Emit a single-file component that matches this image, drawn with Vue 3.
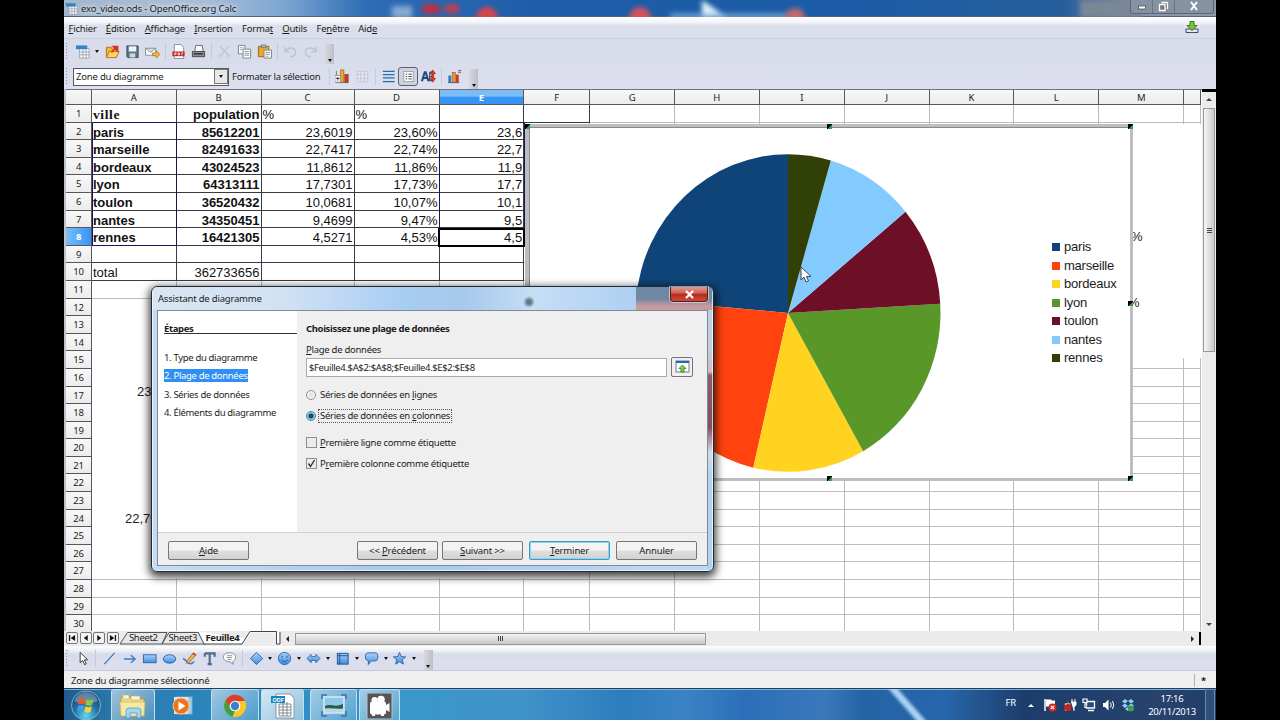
<template>
  <div class="screen">
    <svg class="sprite" width="0" height="0">
      <defs>
        <linearGradient id="blueFill" x1="0" y1="0" x2="0" y2="1">
          <stop offset="0" stop-color="#a9d2f8" />
          <stop offset="1" stop-color="#3f8ee0" />
        </linearGradient>
        <symbol id="i-new" viewBox="0 0 16 16">
          <rect x="5" y="5" width="10" height="10" fill="#fff" stroke="#9aa3b0" />
          <path d="M5 8.5h10M5 11.5h10M8.5 5v10M11.8 5v10" stroke="#9aa3b0" />
          <rect x="1" y="1.5" width="12" height="4" fill="#2f86c8" />
        </symbol>
        <symbol id="i-open" viewBox="0 0 16 16">
          <path d="M1.5 14.5v-11h5l1 2h5v3" fill="#f3b73c" stroke="#b4701c" />
          <path d="M1.5 14.5l3-6.5h10.5l-3 6.5z" fill="#fbd568" stroke="#b4701c" />
          <path d="M7 9l4-5M8.5 2.5h5v5z" fill="#d9301c" stroke="#d9301c" stroke-width="1.5" />
        </symbol>
        <symbol id="i-save" viewBox="0 0 16 16">
          <path d="M2 2h12v12.5h-11l-1-1z" fill="#5d7382" stroke="#3c4c5c" />
          <rect x="4" y="2.5" width="8" height="5.5" fill="#eef3f7" />
          <rect x="5" y="10" width="6" height="4.5" fill="#c9d4dd" />
        </symbol>
        <symbol id="i-mail" viewBox="0 0 16 16">
          <path d="M.5 4.5h11v7.5h-11zM.5 4.5l5.5 4.5 5.5-4.5" fill="#fff" stroke="#8a8f98" />
          <path d="M8 9.5h4v-2.5l4 4-4 4v-2.5h-4z" fill="#f5b53a" stroke="#a8681a" stroke-width=".7" />
        </symbol>
        <symbol id="i-pdf" viewBox="0 0 16 16">
          <path d="M3.5 .5h7l3 3v12h-10z" fill="#fff" stroke="#858b95" />
          <rect x="1.5" y="8" width="13" height="5" fill="#c5232b" />
          <path d="M4 12V9.5h1.5v1.2H4M7.5 9.5v2.2h1.5v-2.2zM11.5 12V9.5h1.5" stroke="#fff" stroke-width=".8" fill="none" />
        </symbol>
        <symbol id="i-print" viewBox="0 0 16 16">
          <path d="M4 8l1-6.5h7l1 6.5z" fill="#f8f8f8" stroke="#666" />
          <path d="M1.5 8h13v5.5h-13z" fill="#8b9099" stroke="#44484f" />
          <path d="M3 10.5h10" stroke="#2d3035" stroke-width="1.5" />
        </symbol>
        <symbol id="i-cut" viewBox="0 0 16 16">
          <path d="M3 2l9 10M13 2L4 12" stroke="#c3c6d0" stroke-width="1.5" />
          <circle cx="3.5" cy="13" r="1.8" fill="none" stroke="#c3c6d0" /><circle cx="12.5" cy="13" r="1.8" fill="none" stroke="#c3c6d0" />
        </symbol>
        <symbol id="i-copy" viewBox="0 0 16 16">
          <path d="M1.5 1.5h7v9h-7z" fill="#fff" stroke="#7a8290" /><path d="M3 4h4M3 6h4" stroke="#9aa" />
          <path d="M6.5 5.5h8v9.5h-8z" fill="#fff" stroke="#7a8290" /><path d="M8 8h5M8 10h5M8 12h5" stroke="#8a94a4" />
        </symbol>
        <symbol id="i-paste" viewBox="0 0 16 16">
          <path d="M1.5 2.5h11v11h-11z" fill="#e9a92d" stroke="#9a661a" />
          <rect x="4.5" y="1" width="5" height="3" fill="#a9aeb7" stroke="#666" stroke-width=".6" />
          <path d="M7.5 6.5h8v8.5h-8z" fill="#fff" stroke="#7a8290" /><path d="M9 9h5M9 11h5M9 13h3" stroke="#8a94a4" />
        </symbol>
        <symbol id="i-undo" viewBox="0 0 16 16">
          <path d="M2 3v5h5M2.5 7.5c3-5 11-4 11 1.5 0 3-3 4.5-6 4.5" fill="none" stroke="#c0c4cf" stroke-width="1.6" />
        </symbol>
        <symbol id="i-redo" viewBox="0 0 16 16">
          <path d="M14 3v5H9M13.5 7.5c-3-5-11-4-11 1.5 0 3 3 4.5 6 4.5" fill="none" stroke="#c0c4cf" stroke-width="1.6" />
        </symbol>
        <symbol id="i-charttype" viewBox="0 0 16 16">
          <path d="M1.5 2v12.5h13" fill="none" stroke="#777" />
          <rect x="6" y="1" width="3.5" height="13" fill="#f0a52a" stroke="#8a5a14" stroke-width=".6" />
          <rect x="10.5" y="6" width="3.5" height="8" fill="#cf3c2c" stroke="#7a1c14" stroke-width=".6" />
          <rect x="0" y="7" width="6" height="7" fill="#fff" stroke="#777" stroke-width=".7" /><path d="M1 10h4M3 8.5v4" stroke="#333" />
        </symbol>
        <symbol id="i-table" viewBox="0 0 16 16">
          <path d="M2.5 2.5h11v11h-11zM2.5 6h11M2.5 10h11M6 2.5v11M10 2.5v11" fill="#e4e6ee" stroke="#c5c8d2" />
        </symbol>
        <symbol id="i-hlines" viewBox="0 0 16 16">
          <rect x="2" y="2" width="12.5" height="12" fill="#cfe0f5" />
          <path d="M2 2.5h12.5M2 6h12.5M2 9.5h12.5M2 13.5h12.5" stroke="#33689f" stroke-width="1.3" />
        </symbol>
        <symbol id="i-legend" viewBox="0 0 16 16">
          <rect x="3" y="2.5" width="10" height="11" fill="#fafafa" stroke="#8b909a" stroke-width=".8" />
          <path d="M5 5.5h1.5M5 8h1.5M5 10.5h1.5M8 5.5h3.5M8 8h3.5M8 10.5h3.5" stroke="#444" />
        </symbol>
        <symbol id="i-scale" viewBox="0 0 16 16">
          <path d="M1 13L4 3.5h1L8 13M2.5 9.5h4" fill="none" stroke="#234a78" stroke-width="2.2" />
          <path d="M9 3.5h3M9 8h3M9 12.5h3M9.3 3v10" stroke="#234a78" stroke-width="1.2" />
          <path d="M12.5 1l3 4h-2v5h2l-3 4-3-4h2v-5h-2z" fill="#d63a26" stroke="#8a1c10" stroke-width=".6" />
        </symbol>
        <symbol id="i-bars" viewBox="0 0 16 16">
          <rect x="1.5" y="7" width="3" height="7" fill="#2d78bd" /><rect x="5.5" y="3.5" width="3.5" height="10.5" fill="#f0922a" stroke="#8a4a14" stroke-width=".5" /><rect x="9.5" y="6" width="3" height="8" fill="#c9382a" />
          <path d="M1 14.5h12M12 1.5h3M12 3.5h3" stroke="#555" />
        </symbol>
        <symbol id="i-select" viewBox="0 0 16 16">
          <path d="M5.5 1.5v11l2.7-2.5 2 4.5 1.8-.8-2-4.3h3.5z" fill="#fff" stroke="#222" stroke-width=".9" />
        </symbol>
        <symbol id="i-line" viewBox="0 0 16 16"><path d="M2.5 14L13.5 2" stroke="#3b6fb0" stroke-width="1.2" /></symbol>
        <symbol id="i-arrow" viewBox="0 0 16 16"><path d="M2 8.5h12M9.5 4.5l4.5 4-4.5 4" fill="none" stroke="#3b7cc4" stroke-width="1.4" /></symbol>
        <symbol id="i-rect" viewBox="0 0 16 16"><rect x="1.5" y="4" width="13.5" height="8.5" fill="url(#blueFill)" stroke="#2d63a4" /></symbol>
        <symbol id="i-ellipse" viewBox="0 0 16 16"><ellipse cx="8" cy="8.5" rx="6.7" ry="4.5" fill="url(#blueFill)" stroke="#2d63a4" /></symbol>
        <symbol id="i-pen" viewBox="0 0 16 16">
          <path d="M1 8c3 1 5 5 7 5.5s4-1 5-2.5" fill="none" stroke="#3b7cc4" stroke-width="1.5" />
          <path d="M5 11l7-9 3 2-7 8-3.5 1z" fill="#f4b640" stroke="#8a5a14" stroke-width=".8" /><path d="M11.5 2.5l3 2" stroke="#c23a20" stroke-width="1.5" />
        </symbol>
        <symbol id="i-text" viewBox="0 0 16 16"><path d="M3 2.5h10.5v3.5M3 2.5V6M8.2 2.5v11M6 14h4.5" fill="none" stroke="#4c6a8c" stroke-width="2.2" /></symbol>
        <symbol id="i-note" viewBox="0 0 16 16">
          <path d="M8 2c4.5 0 6.5 2 6.5 4.7S12 11 11.5 11.2l.5 3-3.5-2.8C4 11.5 1.5 9.5 1.5 6.7S3.5 2 8 2z" fill="#fff" stroke="#7c8591" />
          <path d="M5 5h6M5 7h6M6 9h4" stroke="#7c8591" stroke-width=".9" />
        </symbol>
        <symbol id="i-diamond" viewBox="0 0 16 16"><path d="M8 1.5l6.5 6.5L8 14.5 1.5 8z" fill="url(#blueFill)" stroke="#2d63a4" /></symbol>
        <symbol id="i-smiley" viewBox="0 0 16 16">
          <circle cx="8" cy="8" r="6.5" fill="url(#blueFill)" stroke="#2d63a4" /><path d="M5.5 5v2M10.5 5v2M4.5 9c1.5 3 5.5 3 7 0" fill="none" stroke="#1d4c86" />
        </symbol>
        <symbol id="i-dbl" viewBox="0 0 16 16"><path d="M1 8l4.5-4.5V6h5V3.5L15 8l-4.5 4.5V10h-5v2.5z" fill="url(#blueFill)" stroke="#2d63a4" stroke-width=".9" /></symbol>
        <symbol id="i-flow" viewBox="0 0 16 16"><rect x="2.5" y="2.5" width="11.5" height="11.5" fill="url(#blueFill)" stroke="#1f4f8c" /><path d="M5 2.5v11.5M2.5 5h11.5" stroke="#1f4f8c" /></symbol>
        <symbol id="i-callout" viewBox="0 0 16 16"><path d="M4 2h8.5c3 0 3 8.5 0 8.5H8l-3.5 4 .3-4C.5 10.5.5 2 4 2z" fill="url(#blueFill)" stroke="#2d63a4" /></symbol>
        <symbol id="i-star" viewBox="0 0 16 16"><path d="M8 1.5l1.8 4.5 4.7.3-3.6 3 1.2 4.7L8 11.4 3.9 14l1.2-4.7-3.6-3 4.7-.3z" fill="url(#blueFill)" stroke="#2d63a4" /></symbol>
      </defs>
    </svg>

    <div class="desktop">
      <header class="titlebar">
        <svg class="title-blur" width="1152" height="17">
          <g class="blobs">
            <rect x="328" y="6" width="20" height="12" fill="#dfe9f5" opacity=".5" />
            <ellipse cx="367" cy="9" rx="10" ry="5" fill="#c0303c" /><ellipse cx="388" cy="9" rx="8" ry="5" fill="#b84250" />
            <circle cx="423" cy="18" r="11" fill="#d4464e" /><circle cx="576" cy="18" r="11" fill="#d4525c" />
            <path d="M638 0l26 18h-26z" fill="#e4f4fa" /><rect x="606" y="13" width="130" height="6" fill="#7fb4dc" opacity=".7" />
            <circle cx="731" cy="18" r="10" fill="#c06a72" /><rect x="1016" y="0" width="62" height="18" fill="#7a8796" />
          </g>
        </svg>
        <svg class="title-icon" width="13" height="13"><use href="#i-new" /></svg>
        <span class="title-text">exo_video.ods - OpenOffice.org Calc</span>
        <div class="win-buttons">
          <span><svg width="10" height="10"><rect x="1.5" y="5" width="7" height="3" fill="#fff" stroke="#444" stroke-width=".7" /></svg></span>
          <span><svg width="11" height="11"><path d="M3.5 1.5h6v6.5M1.5 3.5h5.5v6h-5.5z" fill="#777" stroke="#fff" stroke-width="1.3" /></svg></span>
          <span class="win-close"><svg width="10" height="10"><path d="M2 1l6 8M8 1L2 9" stroke="#fff" stroke-width="2" /></svg></span>
        </div>
      </header>

      <nav class="menubar">
        <span v-for="m in menus" :key="m[1]" class="menu-item">{{ m[0] }}<u>{{ m[1] }}</u>{{ m[2] }}</span>
        <svg class="update-icon" width="14" height="13" viewBox="0 0 14 13">
          <path d="M1 8h12v3.5H1z" fill="#dfe6f2" stroke="#33506e" />
          <path d="M5 .5h4v4h3L7 9.5 2 4.5h3z" fill="#7cc23a" stroke="#3d7a14" />
        </svg>
      </nav>

      <div class="toolbar tb-standard">
        <i class="grip"></i>
        <template v-for="(t, i) in standardTools" :key="i">
          <i v-if="t === '|'" class="sep"></i>
          <i v-else-if="t === 'v'" class="caret"></i>
          <span v-else class="tool"><svg width="15" height="15"><use :href="'#i-' + t" /></svg></span>
        </template>
        <i class="overflow"></i>
      </div>

      <div class="toolbar tb-format">
        <i class="grip"></i>
        <div class="combo"><span>Zone du diagramme</span><b><i class="caret"></i></b></div>
        <span class="format-label">Formater la sélection</span>
        <template v-for="(t, i) in chartTools" :key="i">
          <i v-if="t === '|'" class="sep"></i>
          <span v-else class="tool" :class="{ pressed: t === 'legend' }"><svg width="15" height="15"><use :href="'#i-' + t" /></svg></span>
        </template>
        <i class="overflow"></i>
      </div>

      <main class="workspace">
        <div class="sheet">
          <div class="row head">
            <div class="cell corner"></div>
            <div v-for="c in columns" :key="c" class="cell col-head" :class="{ active: c === 'E' }">{{ c }}</div>
          </div>
          <div v-for="r in 30" :key="r" class="row">
            <div class="cell row-head" :class="{ active: r === 8 }">{{ r }}</div>
            <div v-for="(c, ci) in columns" :key="c" class="cell" :class="cellClass(r, ci)">{{ cellText(r, ci) }}</div>
          </div>

          <div class="old-chart left"><span class="pct p1">23,6</span><span class="pct p2">22,7%</span></div>
          <div class="old-chart right"><span class="pct p3">%</span><span class="pct p4">%</span></div>
          <div class="range range-a"></div>
          <div class="range range-e"></div>
          <div class="cursor-cell"></div>

          <div class="chart">
            <svg class="pie" width="600" height="350">
              <path v-for="s in slices" :key="s.name" :d="s.d" :fill="s.color" />
            </svg>
            <ul class="legend">
              <li v-for="s in slices" :key="s.name"><svg width="8" height="8"><rect width="8" height="8" :fill="s.color" /></svg>{{ s.name }}</li>
            </ul>
            <i class="handle tl"></i><i class="handle tc"></i><i class="handle tr"></i>
            <i class="handle mr"></i><i class="handle bc"></i><i class="handle br"></i>
          </div>
          <svg class="pointer" width="12" height="18" viewBox="0 0 12 18">
            <path d="M1 1v13l3-2.8 2 4.8 2.5-1-2-4.6H11z" fill="#fff" stroke="#333" stroke-width=".9" />
          </svg>
        </div>
        <div class="vscroll">
          <i class="split"></i>
          <i class="tri up"></i>
          <div class="vthumb"><i></i><i></i><i></i></div>
          <i class="tri down"></i>
        </div>
      </main>

      <div class="tabbar">
        <div class="nav-btns">
          <span v-for="(d, i) in navPaths" :key="i"><svg width="8" height="8" viewBox="0 0 9 9"><path :d="d" fill="#111" /></svg></span>
        </div>
        <div class="tabs">
          <svg class="tab-shape" width="165" height="14">
            <path d="M0 13L7.5 1.5H47L42 13zM42 13L49 1.5H80l6 11.5z" fill="#e6e6e6" stroke="#555" />
            <path d="M77 0L84 13H123L130 .5H159V13" fill="#fff" stroke="none" />
            <path d="M78 1l6 12H122L130 .5H156.5V13H160V1" fill="none" stroke="#444" />
            <path d="M124 13L131 1.5H156V13z" fill="#ececec" />
          </svg>
          <span class="tab">Sheet2</span><span class="tab">Sheet3</span><span class="tab current">Feuille4</span>
        </div>
        <div class="hscroll">
          <i class="tri prev"></i>
          <div class="hthumb"><i></i><i></i><i></i></div>
          <i class="tri next"></i>
          <i class="hsplit"></i>
        </div>
      </div>

      <div class="toolbar tb-draw">
        <i class="grip"></i>
        <template v-for="(t, i) in drawTools" :key="i">
          <i v-if="t === '|'" class="sep"></i>
          <i v-else-if="t === 'v'" class="caret"></i>
          <span v-else class="tool"><svg width="15" height="15"><use :href="'#i-' + t" /></svg></span>
        </template>
        <i class="overflow"></i>
      </div>

      <div class="statusbar"><span>Zone du diagramme sélectionné</span><b>*</b></div>

      <footer class="taskbar">
        <svg class="streak" width="120" height="31"><path d="M26 -6L70 44" stroke="#a9d2f4" stroke-width="7" /></svg>
        <svg class="orb" width="32" height="32" viewBox="0 0 32 32">
          <defs>
            <radialGradient id="orbFill" cx=".5" cy=".85" r=".8">
              <stop offset="0" stop-color="#5fd8f4" /><stop offset=".5" stop-color="#2276a8" /><stop offset="1" stop-color="#16426e" />
            </radialGradient>
          </defs>
          <circle cx="16" cy="16.5" r="14.5" fill="url(#orbFill)" stroke="#9fc4dc" stroke-width=".8" />
          <path d="M4 12a12.5 12.5 0 0 1 24 0c-7 3-17 3-24 0z" fill="#fff" opacity=".3" />
          <path d="M9 10c2-1 4-1 6.5 0l-1 5.5c-2-1-4-1-6.5 0z" fill="#ee5a28" />
          <path d="M16.5 10.5c2 1 4 1 7 0l-1.5 5.5c-2 1-4 1-6.5 0z" fill="#8fc83c" />
          <path d="M8 17c2-1 4-1 6.5 0l-1 5.5c-2-1-4-1-6.5 0z" fill="#3f9fe8" />
          <path d="M15.3 17.5c2 1 4 1 6.7 0l-1.5 5.5c-2 1-4 1-6.2 0z" fill="#fcd03a" />
        </svg>
        <div class="task b-explorer">
          <svg width="28" height="26" viewBox="0 0 28 26">
            <path d="M2 4h9l1 2h13v17H2z" fill="#f1dc84" stroke="#c0a03c" /><path d="M4 2h6v4H4zM12 3h9v4h-9z" fill="#f8f3d8" stroke="#c9b264" stroke-width=".6" />
            <path d="M1 9h25l-1 14H2z" fill="#f7e9a4" stroke="#cdb255" stroke-width=".7" />
            <path d="M7 25v-7q0-3 3-3h9q3 0 3 3v7h-4v-5h-7v5z" fill="#a5d6f0" stroke="#4f9cc8" stroke-width=".8" />
          </svg>
        </div>
        <div class="task plain b-media">
          <svg width="22" height="22" viewBox="0 0 22 22">
            <rect x="5" y="2" width="15" height="17" fill="#a9cfe8" stroke="#7aaed0" /><rect x="2" y="2" width="14" height="17" fill="#d4e8f5" />
            <circle cx="9" cy="11" r="8" fill="#ee7420" stroke="#fbc08a" /><path d="M6.5 6.5l7 4.5-7 4.5z" fill="#fff" />
          </svg>
        </div>
        <div class="task b-chrome">
          <svg width="24" height="24" viewBox="0 0 24 24">
            <circle cx="12" cy="12" r="11" fill="#fbc927" />
            <path d="M2.5 6.5L8 14.5A5 5 0 0 0 12 17L9.5 22.7A11 11 0 0 1 2.5 6.5z" fill="#3ba14a" />
            <path d="M2.5 6.5L7.7 14l4-7H22A11 11 0 0 0 2.5 6.5z" fill="#dd3e2f" />
            <circle cx="12" cy="12" r="5.3" fill="#fff" /><circle cx="12" cy="12" r="4.2" fill="#3c7fd0" />
          </svg>
        </div>
        <div class="task active b-odf">
          <svg width="24" height="26" viewBox="0 0 24 26">
            <path d="M5 1h14l4 4v20H5z" fill="#fff" stroke="#8895a2" /><path d="M8 11h12v12H8zM8 14h12M8 17h12M8 20h12M12 9v14M16 9v14" fill="none" stroke="#66717d" stroke-width=".8" />
            <rect x="0" y="3" width="14" height="7" fill="#1585c0" />
            <text x="1.5" y="9" class="odf-text">ODF</text>
          </svg>
        </div>
        <div class="task b-photo">
          <svg width="26" height="24" viewBox="0 0 26 24">
            <rect x="3" y="3" width="20" height="16" fill="#8fc8ea" stroke="#dceaf4" stroke-width="1.5" /><path d="M4 12c5-3 10 2 18-2v5H4z" fill="#2c5a4c" /><path d="M4 14.5c6-1 12 1 18 0V18H4z" fill="#b8d8e4" />
            <path d="M1 5V1h5M20 1h5v4M25 17v5h-5M6 22H1v-5" fill="none" stroke="#3f6fae" stroke-width="1.5" />
          </svg>
        </div>
        <div class="task b-camera">
          <svg width="27" height="26" viewBox="0 0 27 26">
            <rect x="1" y="0" width="25" height="26" fill="#5a5356" stroke="#b8c4cc" />
            <circle cx="8.5" cy="7" r="3" fill="#fff" /><circle cx="15" cy="6.5" r="3.8" fill="#fff" /><rect x="4" y="8.5" width="16" height="13" rx="2" fill="#fff" /><path d="M20 12l3.5-2v9l-3.5-2zM6 21h3v2H6zM15 21h3v2h-3z" fill="#fff" />
          </svg>
        </div>
        <div class="tray">
          <span class="lang">FR</span>
          <i class="tri up light"></i>
          <svg width="14" height="14" viewBox="0 0 14 14"><path d="M2 1v12" stroke="#fff" stroke-width="1.5" /><path d="M3 1.5h5l1 1h3v6H3z" fill="#fff" /><circle cx="9.5" cy="9.5" r="4" fill="#d8271e" /><path d="M7.8 7.8l3.4 3.4M11.2 7.8l-3.4 3.4" stroke="#fff" stroke-width="1.2" /></svg>
          <svg width="14" height="14" viewBox="0 0 14 14"><path d="M1.5 5h6v8h-6zM3 3.5h3v1.5" fill="#e8e8e8" stroke="#222" stroke-width=".6" /><path d="M9 1v3M12 1v3M8 4h5v3l-2 2v4" fill="#fff" stroke="#fff" /><circle cx="5" cy="9.5" r="3.5" fill="#c8201c" /></svg>
          <svg width="14" height="14" viewBox="0 0 14 14"><path d="M4.5 3.5h8v6.5h-8zM6 12.5h6" fill="#274a78" stroke="#fff" stroke-width="1.3" /><path d="M1 1h4v3.5H1zM3 4.5v5h2" fill="#274a78" stroke="#fff" stroke-width="1.2" /></svg>
          <svg width="14" height="14" viewBox="0 0 14 14"><path d="M1 5h2l3.5-3.5v11L3 9H1z" fill="#fff" /><path d="M8.5 4.5q1.5 2.5 0 5M10.5 3q2.5 4 0 8" fill="none" stroke="#fff" /></svg>
          <svg width="14" height="14" viewBox="0 0 14 14"><path d="M4 1l3 2-3 2.5L1 3.5zM10 1l3 2.5-3 2L7 3zM1 7.5l3-2L7 8l-3 2zM10 5.5l3 2L10 10 7 8zM4 11l3-2 3 2-3 2z" fill="#8fd0f6" /><circle cx="10" cy="10.5" r="3" fill="#38a04c" /></svg>
        </div>
        <div class="clock"><span>17:16</span><span>20/11/2013</span></div>
        <i class="show-desktop"></i>
      </footer>

      <section class="dialog">
        <div class="dialog-title">
          <span>Assistant de diagramme</span>
          <button class="dialog-close"><svg width="9" height="9" viewBox="0 0 9 9"><path d="M1 1l7 7M8 1L1 8" stroke="#fff" stroke-width="2.2" /></svg></button>
        </div>
        <div class="dialog-body">
          <div class="dialog-main">
            <aside class="steps">
              <h4>Étapes</h4>
              <p v-for="(s, i) in steps" :key="s"><span :class="{ selected: i === 1 }">{{ i + 1 }}. {{ s }}</span></p>
            </aside>
            <div class="panel">
              <h4>Choisissez une plage de données</h4>
              <label class="range-label"><u>P</u>lage de données</label>
              <div class="range-input">
                <div class="field">$Feuille4.$A$2:$A$8;$Feuille4.$E$2:$E$8</div>
                <div class="shrink">
                  <svg width="15" height="14" viewBox="0 0 15 14"><rect x="1" y="1" width="13" height="11" fill="#fff" stroke="#6b7f98" /><path d="M1 2h13" stroke="#2a63b8" stroke-width="2" /><path d="M7.5 5l3.5 3.5H9V12H6V8.5H4z" fill="#8fd04c" stroke="#2f7a12" stroke-width=".8" /></svg>
                </div>
              </div>
              <div class="opt o1"><i class="radio"></i><span>Séries de données en <u>l</u>ignes</span></div>
              <div class="opt o2"><i class="radio on"></i><span class="focus">Séries de données en <u>c</u>olonnes</span></div>
              <div class="opt o3"><i class="check"></i><span><u>P</u>remière ligne comme étiquette</span></div>
              <div class="opt o4"><i class="check"><svg width="9" height="9" viewBox="0 0 9 9"><path d="M1.5 4.5l2 3L7.5 1" fill="none" stroke="#26304e" stroke-width="1.4" /></svg></i><span>P<u>r</u>emière colonne comme étiquette</span></div>
            </div>
          </div>
          <div class="dialog-foot">
            <button class="btn help"><u>A</u>ide</button>
            <button class="btn">&lt;&lt; <u>P</u>récédent</button>
            <button class="btn next-btn"><u>S</u>uivant &gt;&gt;</button>
            <button class="btn default"><u>T</u>erminer</button>
            <button class="btn cancel">Annuler</button>
          </div>
        </div>
      </section>
    </div>
  </div>
</template>

<script setup>
import { computed } from 'vue';

const menus = [
  ['', 'F', 'ichier'], ['', 'É', 'dition'], ['', 'A', 'ffichage'], ['', 'I', 'nsertion'],
  ['Forma', 't', ''], ['', 'O', 'utils'], ['Fe', 'n', 'être'], ['Aid', 'e', '']
];

const standardTools = ['new', 'v', 'open', 'save', 'mail', '|', 'pdf', 'print', '|', 'cut', 'copy', 'paste', '|', 'undo', 'redo'];
const chartTools = ['|', 'charttype', 'table', '|', 'hlines', 'legend', 'scale', '|', 'bars'];
const drawTools = [
  'select', '|', 'line', 'arrow', 'rect', 'ellipse', 'pen', 'text', 'note', '|',
  'diamond', 'v', 'smiley', 'v', 'dbl', 'v', 'flow', 'v', 'callout', 'v', 'star', 'v'
];

const columns = ['A', 'B', 'C', 'D', 'E', 'F', 'G', 'H', 'I', 'J', 'K', 'L', 'M', ''];

const rows = {
  1: ['ville', 'population', '%', '%'],
  2: ['paris', '85612201', '23,6019', '23,60%', '23,6'],
  3: ['marseille', '82491633', '22,7417', '22,74%', '22,7'],
  4: ['bordeaux', '43024523', '11,8612', '11,86%', '11,9'],
  5: ['lyon', '64313111', '17,7301', '17,73%', '17,7'],
  6: ['toulon', '36520432', '10,0681', '10,07%', '10,1'],
  7: ['nantes', '34350451', '9,4699', '9,47%', '9,5'],
  8: ['rennes', '16421305', '4,5271', '4,53%', '4,5'],
  10: ['total', '362733656']
};

const cities = [
  ['paris', 23.6019, '#0e4478'],
  ['marseille', 22.7417, '#ff420e'],
  ['bordeaux', 11.8612, '#ffd320'],
  ['lyon', 17.7301, '#5a9729'],
  ['toulon', 10.0681, '#6c0f27'],
  ['nantes', 9.4699, '#83caff'],
  ['rennes', 4.5271, '#314004']
];

const navPaths = [
  'M1 1h1.5v7H1zM8 1v7L3 4.5z',
  'M6.5 1v7L2 4.5z',
  'M2.5 1v7L7 4.5z',
  'M6.5 1H8v7H6.5zM1 1v7l5-3.5z'
];

const steps = ['Type du diagramme', 'Plage de données', 'Séries de données', 'Éléments du diagramme'];

// slices run counter-clockwise from twelve o'clock
const slices = computed(() => {
  const cx = 259;
  const cy = 186;
  const rx = 152.5;
  const ry = 158.8;
  const point = (v) => {
    const a = (v / 100) * Math.PI * 2;
    return `${cx - rx * Math.sin(a)} ${cy - ry * Math.cos(a)}`;
  };
  let total = 0;
  return cities.map(([name, value, color]) => {
    const d = `M${cx} ${cy}L${point(total)}A${rx} ${ry} 0 0 0 ${point(total + value)}Z`;
    total += value;
    return { name, color, d };
  });
});

function cellText(r, c) {
  return rows[r]?.[c] ?? '';
}

function cellClass(r, c) {
  return {
    lined: (r <= 10 && c < 5) || (r === 1 && c === 5),
    num: (c > 0 && r > 1) || (r === 1 && c === 1),
    bold: r < 9 && c < 2,
    serif: r === 1 && c === 0
  };
}
</script>

<style>
body {
  background: #000;
  overflow: hidden;
}
</style>

<style scoped>
.screen {
  width: 1280px;
  height: 720px;
  background: #000;
  display: flex;
  justify-content: center;
  overflow: hidden;
  font-family: "Noto Sans", "Open Sans", sans-serif;
  font-size: 9.5px;
  letter-spacing: -0.2px;
  color: #1c1c1c;
}

.screen * {
  box-sizing: border-box;
}

.sprite {
  position: absolute;
}

.desktop {
  position: relative;
  width: 1152px;
  height: 720px;
  display: flex;
  flex-direction: column;
  overflow: hidden;
  white-space: nowrap;
}

u {
  text-underline-offset: 1px;
}

.titlebar {
  position: relative;
  height: 17px;
  flex: none;
  display: flex;
  align-items: center;
  padding-left: 1px;
  background: linear-gradient(90deg, #a3b6cc 0, #a9bed6 140px, #7da6d2 220px, #2f6eb6 300px, #1d5ca8 480px, #1c5ca6 800px, #275f9c 1000px, #8795a5 1080px, #8a98a8);
  border-bottom: 1px solid #51657e;
}

.title-blur {
  position: absolute;
  left: 0;
  top: 0;
}

.blobs {
  filter: blur(2.5px);
}

.title-icon,
.title-text,
.win-buttons {
  position: relative;
}

.title-text {
  margin-left: 3px;
  letter-spacing: -0.15px;
  text-shadow: 0 0 5px #e8f0f8, 0 0 5px #e8f0f8;
}

.win-buttons {
  display: flex;
  height: 14px;
  margin: -3px 2px 0 auto;
  border: 1px solid #596878;
  border-top: 0;
  border-radius: 0 0 3px 3px;
  background: #8592a2;
}

.win-buttons span {
  width: 22px;
  display: flex;
  align-items: center;
  justify-content: center;
  border-right: 1px solid #657586;
}

.win-buttons .win-close {
  width: 38px;
  border-right: 0;
}

.menubar {
  height: 22px;
  flex: none;
  display: flex;
  align-items: center;
  padding: 2px 17px 0 4.5px;
  gap: 9.2px;
  background: linear-gradient(#fff 0, #f4f5fa 5px, #dcdfec 9px, #dadeeb);
  border-bottom: 1px solid #cdd1df;
}

.update-icon {
  margin: -2px 0 0 auto;
}

.toolbar {
  display: flex;
  align-items: center;
  flex: none;
  background: #d8dceb;
}

.tb-standard {
  height: 25px;
}

.tb-format {
  height: 25px;
  background: linear-gradient(#d8dceb, #dfe0ef);
}

.tb-draw {
  height: 25px;
  background: linear-gradient(#fff, #eceef6 5px, #d8dcea 8px, #dddfee);
  border-bottom: 1px solid #c6c9d8;
}

.grip {
  width: 3px;
  height: 17px;
  margin: 0 4px 0 2px;
  background: repeating-linear-gradient(#8d93a6 0 1px, transparent 1px 3px);
  border-right: 2px solid #d8dceb;
}

.tb-standard .grip,
.tb-draw .grip {
  margin-right: 3px;
}

.tool {
  width: 20px;
  height: 19px;
  display: flex;
  align-items: center;
  justify-content: center;
}

.tool.pressed {
  border: 1px solid #5b6270;
  border-radius: 3px;
  background: #d0d3dd;
}

.sep {
  width: 1px;
  height: 17px;
  margin: 0 2.5px;
  background: #c6cada;
}

.tb-draw .sep {
  margin: 0 3px;
}

.caret {
  width: 10px;
  display: flex;
  justify-content: center;
}

.caret::before {
  content: "";
  border: 2.5px solid transparent;
  border-top: 3px solid #111;
  border-bottom: 0;
}

.tb-draw .caret {
  width: 8.8px;
}

.overflow {
  width: 9px;
  height: 20px;
  margin: 4px 0 0 5px;
  background: linear-gradient(90deg, #d8d9de, #bcbec6);
  display: flex;
  align-items: flex-end;
  justify-content: center;
  padding-bottom: 2px;
}

.overflow::before {
  content: "";
  border: 2.5px solid transparent;
  border-top: 3px solid #111;
  border-bottom: 0;
}

.combo {
  width: 156px;
  height: 18px;
  display: flex;
  align-items: center;
  justify-content: space-between;
  background: #fff;
  border: 1px solid #555a66;
  padding-left: 2px;
  letter-spacing: -0.2px;
}

.combo b {
  width: 14px;
  height: 15px;
  display: flex;
  align-items: center;
  justify-content: center;
  background: #e8e8e8;
  border: 1px solid #777;
}

.format-label {
  width: 94px;
  margin-left: 3px;
  letter-spacing: -0.27px;
}

.workspace {
  height: 542px;
  flex: none;
  display: flex;
  padding-left: 2px;
  background: #bfc2c8;
}

.sheet {
  position: relative;
  width: 1136px;
  height: 542px;
  overflow: hidden;
  background: #fff;
  border-top: 1px solid #70737c;
  letter-spacing: 0;
}

.row {
  display: grid;
  grid-template-columns: 26px 84.5px 85px 93px 85px 84.7px 66.3px 84.5px 84.8px 85px 85px 84.5px 85px 84.9px 17px;
  height: 17.6px;
}

.row.head {
  height: 15px;
}

.cell {
  border-right: 1px solid #bcbcbc;
  border-bottom: 1px solid #bcbcbc;
  font: 13px/17px "Liberation Sans", Arial, sans-serif;
  color: #111;
  overflow: hidden;
  padding: 1px 1px 0 1px;
}

.cell.lined {
  border-color: #3a3a42;
}

.cell.num {
  text-align: right;
}

.cell.bold {
  font-weight: 700;
}

.cell.serif {
  font-family: "Liberation Serif", serif;
  letter-spacing: 0.6px;
  font-size: 13.5px;
}

.cell.corner,
.cell.col-head,
.cell.row-head {
  font: 9.5px/15px "Noto Sans", sans-serif;
  text-align: center;
  color: #222;
  background: linear-gradient(#f8f8f8, #ececec);
  border-color: #55575c;
  padding: 0;
}

.cell.row-head {
  line-height: 17px;
  letter-spacing: -0.3px;
}

.cell.col-head.active,
.cell.row-head.active {
  background: linear-gradient(#7cbcf8 0 45%, #3595f4 50%);
  color: #fff;
  font-weight: 700;
}

.cell.row-head.active {
  background: linear-gradient(90deg, #7cbcf8 0, #3595f4);
}

.old-chart {
  position: absolute;
  background: #fff;
  font: 13px/15px "Liberation Sans", Arial, sans-serif;
}

.old-chart.left {
  left: 26px;
  top: 209.5px;
  width: 440px;
  height: 278px;
}

.old-chart.right {
  left: 1060px;
  top: 34px;
  width: 76px;
  height: 234px;
}

.pct {
  position: absolute;
}

.p1 { left: 45px; top: 84px; }
.p2 { left: 33px; top: 211px; }
.p3 { left: 5px; top: 105px; }
.p4 { left: 2px; top: 171px; }

.range {
  position: absolute;
  top: 32px;
  height: 124px;
  border: 1.5px solid #16165c;
}

.range-a {
  left: 26px;
  width: 85px;
}

.range-e {
  left: 373px;
  width: 86px;
}

.cursor-cell {
  position: absolute;
  left: 372px;
  top: 138px;
  width: 87px;
  height: 19px;
  border: 2px solid #000;
}

.chart {
  position: absolute;
  left: 459px;
  top: 34px;
  width: 608px;
  height: 357px;
  background: #fff;
  border: 3px solid #bdbdbd;
  border-left-width: 4px;
  box-shadow: inset 1px 1px 0 #8a8a8a;
}

.pie {
  position: absolute;
  left: 0;
  top: 0;
}

.legend {
  position: absolute;
  left: 523px;
  top: 111px;
  margin: 0;
  padding: 0;
  list-style: none;
  font: 13px/18.5px "Liberation Sans", Arial, sans-serif;
  letter-spacing: -0.22px;
}

.legend li {
  display: flex;
  align-items: center;
  gap: 4px;
}

.handle {
  position: absolute;
  width: 5px;
  height: 5px;
  background: linear-gradient(135deg, #000 55%, #2f9a4a 60%);
}

.tl { left: -4px; top: -3px; }
.tc { left: 298px; top: -3px; }
.tr { right: -3px; top: -3px; }
.mr { right: -3px; top: 174px; }
.bc { left: 298px; bottom: -3px; }
.br { right: -3px; bottom: -3px; }

.pointer {
  position: absolute;
  left: 734px;
  top: 176px;
}

.vscroll {
  width: 14px;
  display: flex;
  flex-direction: column;
  align-items: center;
  background: #ececec;
}

.split {
  width: 14px;
  height: 3px;
  background: #000;
}

.tri {
  border: 3px solid transparent;
  width: 0;
  height: 0;
}

.tri.up {
  border-bottom: 3px solid #444;
  border-top: 0;
  margin: 6px 0 7px;
}

.tri.down {
  border-top: 3px solid #444;
  border-bottom: 0;
  margin: auto 0 5px;
}

.vthumb {
  width: 12px;
  height: 244px;
  border: 1px solid #999;
  background: linear-gradient(90deg, #f6f6f6, #c9c9c9);
  display: flex;
  flex-direction: column;
  align-items: center;
  justify-content: center;
  gap: 1px;
}

.vthumb i {
  width: 5px;
  height: 1px;
  background: #444;
}

.tabbar {
  height: 15px;
  flex: none;
  display: flex;
  background: #ebebeb;
  padding-left: 2px;
}

.nav-btns {
  display: flex;
  gap: 1.5px;
  padding-top: 1px;
}

.nav-btns span {
  width: 12px;
  height: 12px;
  border: 1px solid #777;
  border-radius: 2px;
  background: #f4f4f4;
  display: flex;
  align-items: center;
  justify-content: center;
}

.tabs {
  position: relative;
  width: 161px;
  margin-left: 1.5px;
  display: flex;
  line-height: 14px;
  letter-spacing: -0.35px;
}

.tab-shape {
  position: absolute;
  left: 0;
  top: 0;
}

.tab {
  position: relative;
  width: 39.5px;
  padding-left: 9px;
}

.tab.current {
  font-weight: 700;
  padding-left: 6.5px;
}

.hscroll {
  flex: 1;
  display: flex;
  align-items: center;
  padding-left: 5px;
}

.tri.prev {
  border-right: 3px solid #222;
  border-left: 0;
}

.hthumb {
  width: 411px;
  height: 12px;
  margin-left: 6px;
  border: 1px solid #999;
  background: linear-gradient(#f2f2f2, #c9c9c9);
  display: flex;
  align-items: center;
  justify-content: center;
  gap: 1px;
}

.hthumb i {
  width: 1px;
  height: 5px;
  background: #444;
}

.tri.next {
  border-left: 3px solid #222;
  border-right: 0;
  margin-left: auto;
}

.hsplit {
  width: 2px;
  height: 13px;
  margin: 0 15px 0 5px;
  background: #000;
}

.statusbar {
  height: 17px;
  flex: none;
  display: flex;
  align-items: center;
  padding: 2px 0 0 7px;
  background: #efefef;
}

.statusbar b {
  margin-left: auto;
  width: 22px;
  padding-left: 6px;
  border-left: 1px solid #b0b0b0;
}

.taskbar {
  flex: 1;
  position: relative;
  display: flex;
  align-items: stretch;
  border-top: 1px solid #1c3f66;
  background: linear-gradient(90deg, #1f5b8c 0, #2b79ad 50px, #2a86bd 150px, #3a97cc 340px, #4092ca 460px, #2d7dbc 560px, #3a83c4 620px, #2a6fb8 680px, #3a78bb 760px, #2463a5 800px, #2666ac 880px, #24558f 915px, #1d3d6c 960px, #27426d 1100px, #203e68);
  box-shadow: inset 0 1px 0 #7eb0d4;
}

.streak {
  position: absolute;
  left: 798px;
  top: 0;
}

.streak path {
  filter: blur(1.5px);
}

.orb {
  margin: 0 0 0 6px;
  flex: none;
}

.task {
  flex: none;
  display: flex;
  align-items: center;
  justify-content: center;
  border: 1px solid #bfe0f2;
  border-bottom: 0;
  border-radius: 3px 3px 0 0;
  background: linear-gradient(135deg, rgba(255, 255, 255, 0.55), rgba(255, 255, 255, 0.15));
}

.task.plain {
  border-color: transparent;
  background: none;
}

.task.active {
  background: linear-gradient(135deg, rgba(255, 255, 255, 0.8), rgba(255, 255, 255, 0.45));
}

.b-explorer { width: 44px; margin-left: 9px; }
.b-media { width: 50px; margin-left: 3px; }
.b-chrome { width: 48px; margin-left: 3px; }
.b-odf { width: 43px; margin-left: 2px; }
.b-photo { width: 47px; margin-left: 6px; }
.b-camera { width: 41px; margin-left: 2px; }

.odf-text {
  font: 700 5.5px "Liberation Sans", sans-serif;
  letter-spacing: 0;
  fill: #fff;
}

.tray {
  margin-left: auto;
  display: flex;
  align-items: center;
  gap: 5.5px;
  color: #fff;
}

.lang {
  margin: -5px 6px 0 0;
}

.tri.up.light {
  border-bottom-color: #fff;
  margin: 0 4px 0 0;
}

.clock {
  width: 72px;
  margin-right: -2px;
  padding-left: 2px;
  display: flex;
  flex-direction: column;
  align-items: center;
  justify-content: center;
  line-height: 13px;
  letter-spacing: -0.3px;
  color: #fff;
}

.show-desktop {
  width: 10px;
  border: 1px solid #6b86a8;
  background: #2f5079;
  margin-right: 1px;
}

.dialog {
  position: absolute;
  left: 87px;
  top: 286px;
  width: 563px;
  height: 286px;
  border: 1px solid #1e2c3a;
  border-radius: 6px;
  padding: 0 5px 5px;
  display: flex;
  flex-direction: column;
  background:
    linear-gradient(#6d7f97 0 22px, #c0cede 22px 60px, #d8b8bc 85px, #8e5c68 88px, #8a4c58 140px, #cfdcea 165px, #b4d2ee 190px) no-repeat right / 6px 100%,
    linear-gradient(90deg, #c5dbf1, #a5cbf0 250px, #bfd9f3);
  box-shadow: inset 0 0 0 1px rgba(255, 255, 255, 0.7), 0 3px 9px 2px rgba(0, 0, 0, 0.75);
}

.dialog-title {
  height: 23px;
  flex: none;
  display: flex;
  align-items: center;
  justify-content: space-between;
  margin: 0 -4px;
  padding-left: 5px;
  border-radius: 5px 5px 0 0;
  background:
    radial-gradient(circle at 376px 15px, #5c7c84 0 2px, transparent 6px),
    linear-gradient(#7088a4 0 12px, #c89aa0 19px) no-repeat right / 76px 100%,
    linear-gradient(90deg, #d8e5f2 0, #d2e2f3 130px, #a8cdf3 250px, #a6c8ea 310px, #c6def6 380px, #b0d0f2 480px);
}

.dialog-close {
  width: 38px;
  height: 15px;
  margin: -8px 4px 0 0;
  padding: 0;
  border: 1px solid #5a1c18;
  border-top: 0;
  border-radius: 0 0 4px 4px;
  background: linear-gradient(#dc9c92 0, #cf5e50 45%, #b52a1c 50%, #cc4c38);
  box-shadow: 0 0 0 1px rgba(255, 255, 255, 0.5);
  display: flex;
  align-items: center;
  justify-content: center;
}

.dialog-body {
  flex: 1;
  display: flex;
  flex-direction: column;
  border: 1px solid #7d8b99;
  background: #efefef;
}

.dialog-main {
  flex: 1;
  display: flex;
}

h4 {
  margin: 0;
  font-size: 9.5px;
  line-height: 13px;
  letter-spacing: -0.36px;
}

.steps {
  width: 139px;
  padding: 11px 0 0 6px;
  background: #fff;
  letter-spacing: -0.33px;
}

.steps h4 {
  border-bottom: 1px solid #333;
  height: 12px;
  margin-bottom: 14px;
}

.steps p {
  margin: 0;
  height: 18.5px;
  display: flex;
  align-items: center;
}

.steps span {
  line-height: 13px;
}

.steps .selected {
  background: #2f8ff2;
  color: #fff;
}

.panel {
  padding: 11px 0 0 9px;
  display: flex;
  flex-direction: column;
  align-items: flex-start;
  letter-spacing: -0.27px;
}

.range-label {
  margin-top: 8px;
  line-height: 13px;
}

.range-input {
  display: flex;
  align-items: center;
  gap: 4px;
  margin-top: 1px;
}

.field {
  width: 361px;
  height: 19px;
  line-height: 17px;
  padding-left: 2px;
  border: 1px solid #a9a9a9;
  background: #fff;
  letter-spacing: -0.37px;
}

.shrink {
  width: 22px;
  height: 20px;
  border: 1px solid #70747a;
  border-radius: 2px;
  background: #f0f0f0;
  display: flex;
  align-items: center;
  justify-content: center;
}

.opt {
  display: flex;
  align-items: center;
  gap: 3px;
  height: 13px;
}

.opt span {
  padding: 0 1px;
  line-height: 12px;
}

.o1 { margin-top: 11px; }
.o2 { margin-top: 8px; }
.o3 { margin-top: 14px; }
.o4 { margin-top: 8px; }

.focus {
  outline: 1px dotted #555;
}

.radio {
  width: 10px;
  height: 10px;
  border: 1px solid #8e8f8f;
  border-radius: 50%;
  background: radial-gradient(#dedede, #fff);
}

.radio.on {
  border-color: #4a7f9f;
  background: radial-gradient(#0f4a78 0 2px, #7cc0dc 3px, #e4f2f8 5px);
}

.check {
  width: 11px;
  height: 11px;
  border: 1px solid #8e8f8f;
  background: #ececec;
  display: flex;
}

.check + span {
  margin-left: -1px;
}

.dialog-foot {
  height: 33px;
  flex: none;
  display: flex;
  align-items: center;
  padding: 2px 10px 0;
  border-top: 1px solid #cfcfcf;
}

.btn {
  width: 81px;
  height: 19px;
  padding: 0;
  font: inherit;
  letter-spacing: -0.15px;
  color: inherit;
  border: 1px solid #777;
  border-radius: 2px;
  background: linear-gradient(#f3f3f3 0 48%, #dfdfdf 52%, #d2d2d2);
}

.btn.help {
  margin-right: auto;
}

.next-btn {
  margin-left: 4px;
}

.btn.default {
  margin: 0 6px;
  border-color: #3c9cc8;
  box-shadow: inset 0 0 0 1px #8ed2ee;
}
</style>
